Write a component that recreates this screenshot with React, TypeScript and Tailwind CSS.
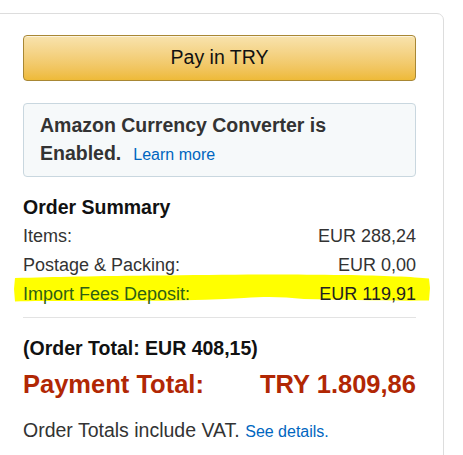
import React from "react";

const rows = [
  { label: "Items:", value: "EUR 288,24" },
  { label: "Postage & Packing:", value: "EUR 0,00" },
];

function Highlight() {
  return (
    <svg
      className="absolute left-[-9px] top-[-6px] h-[28px] w-[416px]"
      viewBox="0 0 416 28"
      preserveAspectRatio="none"
    >
      <path
        d="M1 4 C40 3 80 2 150 1.5 C220 0.5 260 0 330 1 C370 1.5 400 3 415 4.5 L416 14 L415 26.5 C380 27 330 26 290 25 C270 23 255 22 230 24 C180 27 120 27 70 27 C40 27 15 27 1 27.5 L0 15 Z"
        fill="#ffff00"
      />
    </svg>
  );
}

export default function App() {
  return (
    <div
      className="h-[455px] w-[463px] overflow-hidden bg-white pt-[13px]"
      style={{ fontFamily: '"Liberation Sans", Arial, sans-serif' }}
    >
      <div className="ml-[-8px] h-[460px] w-[452px] rounded-tr-[7px] border border-[#dddddd] pl-[30px] pr-[26px] pt-[21px]">
        {/* Pay button */}
        <button className="flex h-[46px] w-[393px] items-center justify-center rounded-[4px] border border-[#a88734] bg-gradient-to-b from-[#f8e3ad] to-[#eeba37] text-[19.5px] text-[#111111] shadow-[inset_0_1px_0_rgba(255,255,255,0.6)]">
          Pay in TRY
        </button>

        {/* Currency converter notice */}
        <div className="mt-[22px] w-[393px] rounded-[4px] border border-[#c9d7df] bg-[#f6f9fa] px-[16px] py-[7px] text-[19.5px] font-bold leading-[28px] text-[#333333]">
          Amazon Currency Converter is
          <br />
          Enabled.
          <span className="ml-[12px] text-[16px] font-normal text-[#0066c0]">
            Learn more
          </span>
        </div>

        {/* Order summary */}
        <div className="mt-[16px] w-[393px]">
          <div className="text-[19.5px] font-bold leading-[29px] text-[#111111]">
            Order Summary
          </div>
          {rows.map((r) => (
            <div
              key={r.label}
              className="flex justify-between text-[18px] leading-[29px] text-[#333333]"
            >
              <span>{r.label}</span>
              <span>{r.value}</span>
            </div>
          ))}
          <div className="relative flex justify-between text-[18px] leading-[29px]">
            <Highlight />
            <span className="relative text-[#2f5f14]">Import Fees Deposit:</span>
            <span className="relative text-[#222222]">EUR 119,91</span>
          </div>

          <div className="mt-[8px] h-px bg-[#e3e3e3]" />

          <div className="mt-[16px] text-[19.5px] font-bold leading-[28px] text-[#111111]">
            (Order Total: EUR 408,15)
          </div>
          <div className="mt-[6px] flex justify-between text-[25.5px] font-bold leading-[32px] text-[#b12704]">
            <span>Payment Total:</span>
            <span>TRY 1.809,86</span>
          </div>
          <div className="mt-[16px] text-[19.5px] leading-[28px] text-[#333333]">
            Order Totals include VAT.{" "}
            <span className="text-[16px] text-[#0066c0]">See details.</span>
          </div>
        </div>
      </div>
    </div>
  );
}
